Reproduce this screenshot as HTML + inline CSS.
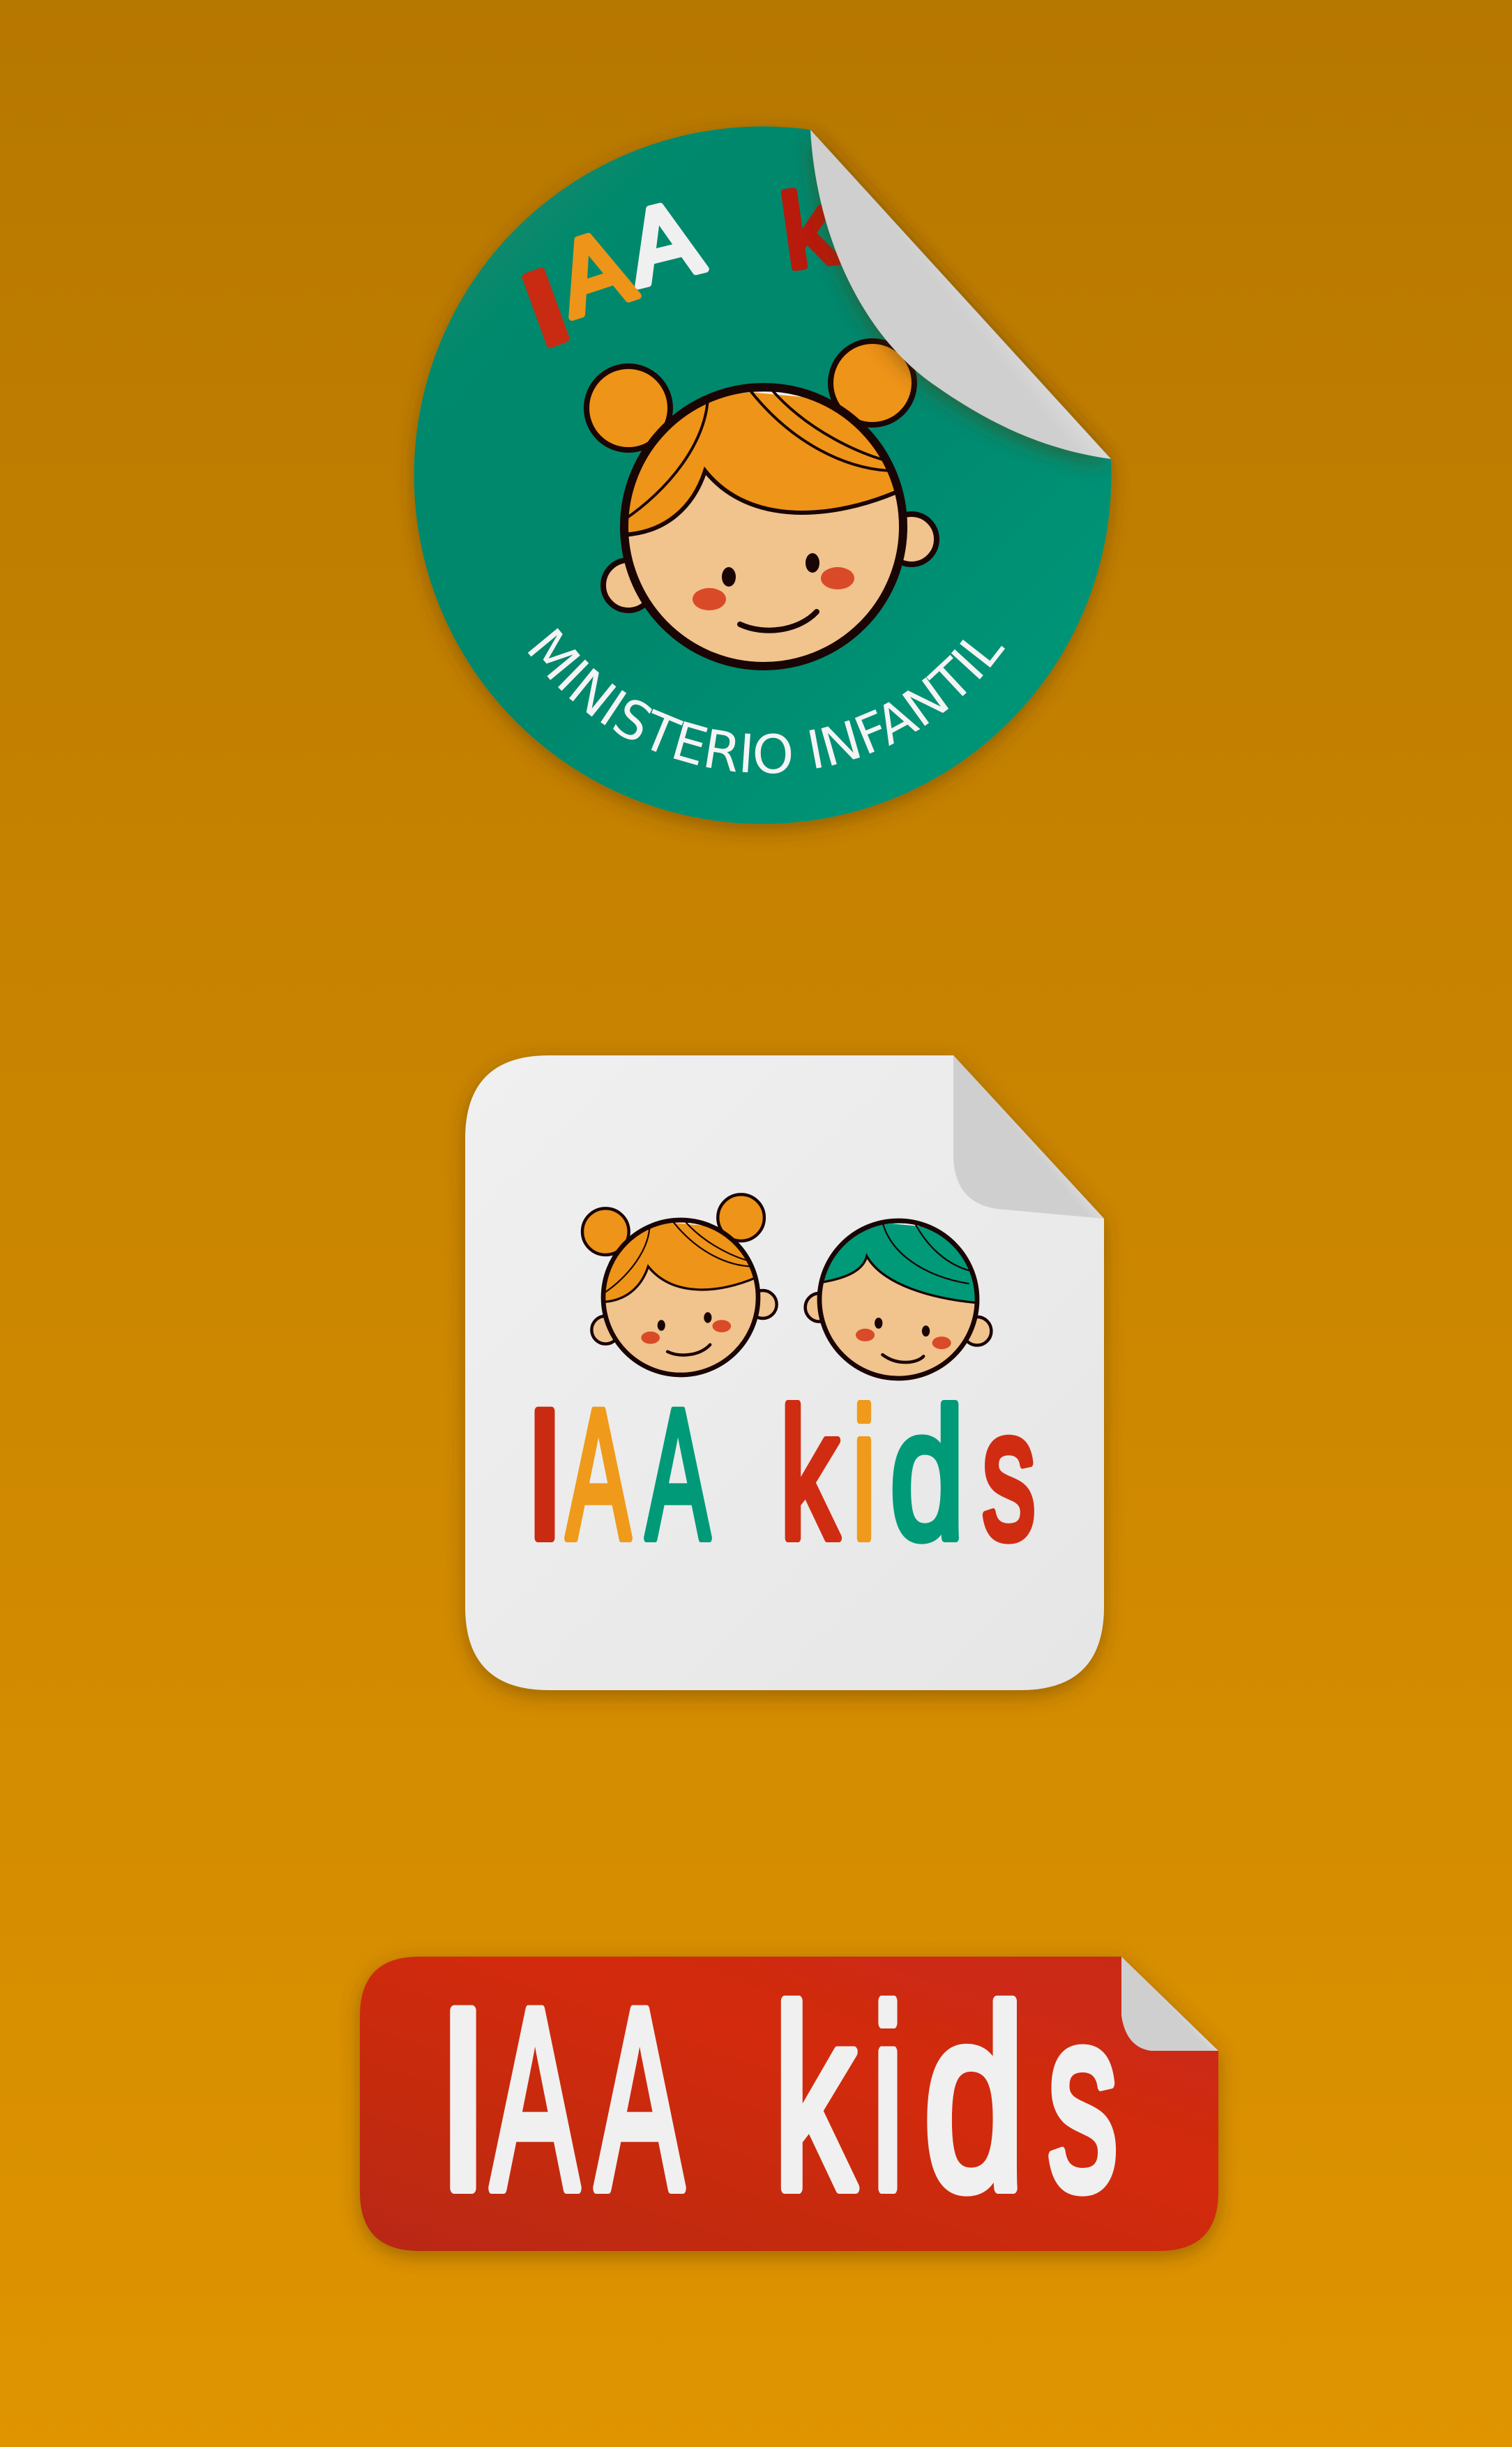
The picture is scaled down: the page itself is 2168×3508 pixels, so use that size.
<!DOCTYPE html>
<html><head><meta charset="utf-8"><style>
html,body{margin:0;padding:0;}
body{width:2168px;height:3508px;overflow:hidden;}
svg{display:block;}
</style></head><body>
<svg width="2168" height="3508" viewBox="0 0 2168 3508" xmlns="http://www.w3.org/2000/svg">
<defs>
<linearGradient id="bg" x1="0" y1="0" x2="0" y2="1">
<stop offset="0" stop-color="#b77800"/><stop offset="1" stop-color="#df9400"/>
</linearGradient>
<linearGradient id="teal" x1="0" y1="0" x2="1" y2="1">
<stop offset="0" stop-color="#0a8a6c"/><stop offset="0.5" stop-color="#00876c"/><stop offset="1" stop-color="#009a7c"/>
</linearGradient>
<linearGradient id="red" x1="0" y1="1" x2="1" y2="0">
<stop offset="0" stop-color="#b82812"/><stop offset="0.6" stop-color="#d32c10"/><stop offset="1" stop-color="#c72a14"/>
</linearGradient>
<linearGradient id="paper" x1="0" y1="0" x2="1" y2="1">
<stop offset="0" stop-color="#f0f0f0"/><stop offset="1" stop-color="#e6e6e6"/>
</linearGradient>
<linearGradient id="curl" x1="0" y1="0" x2="1" y2="-0.9">
<stop offset="0" stop-color="#cfcfcf"/><stop offset="0.25" stop-color="#ffffff"/><stop offset="0.45" stop-color="#e4e4e4"/><stop offset="0.65" stop-color="#ffffff"/><stop offset="1" stop-color="#d8d8d8"/>
</linearGradient>
<filter id="sh" x="-20%" y="-20%" width="140%" height="140%">
<feDropShadow dx="0" dy="8" stdDeviation="14" flood-color="#5a3000" flood-opacity="0.45"/>
</filter>
<clipPath id="fc"><circle r="100"/></clipPath>
<g id="girl">
<circle cx="-97" cy="-85" r="30" fill="#ee9418" stroke="#1a0505" stroke-width="4"/>
<circle cx="78" cy="-103" r="30" fill="#ee9418" stroke="#1a0505" stroke-width="4"/>
<circle cx="-97" cy="42" r="18" fill="#f1c38d" stroke="#1a0505" stroke-width="4"/>
<circle cx="106" cy="9" r="18" fill="#f1c38d" stroke="#1a0505" stroke-width="4"/>
<circle r="100" fill="#f1c38d"/>
<g clip-path="url(#fc)">
<path d="M-105 6 C-70 6 -50 -15 -42 -40 C-10 0 50 -5 98 -26 L110 -120 L-110 -120 Z" fill="#ee9418"/>
<path d="M-70 -80 C-40 -100 20 -100 60 -90 L-50 -100 Z" fill="#f2f2f2"/>
<path d="M-105 6 C-70 6 -50 -15 -42 -40 C-10 0 50 -5 98 -26" fill="none" stroke="#1a0505" stroke-width="3"/>
<path d="M-40 -95 C-40 -60 -70 -25 -100 -5 M-10 -98 C20 -60 60 -40 95 -40 M5 -99 C30 -70 70 -50 98 -45" fill="none" stroke="#1a0505" stroke-width="2"/>
</g>
<circle r="100" fill="none" stroke="#1a0505" stroke-width="6"/>
<ellipse cx="-25" cy="36" rx="5" ry="7" fill="#1a0505"/>
<ellipse cx="35" cy="26" rx="5" ry="7" fill="#1a0505"/>
<ellipse cx="-39" cy="52" rx="12" ry="8" fill="#d94a28"/>
<ellipse cx="53" cy="37" rx="12" ry="8" fill="#d94a28"/>
<path d="M-17 70 C0 78 25 75 38 61" fill="none" stroke="#1a0505" stroke-width="4" stroke-linecap="round"/>
</g>
<g id="boy">
<circle cx="-100" cy="10" r="18" fill="#f1c38d" stroke="#1a0505" stroke-width="4"/>
<circle cx="100" cy="40" r="18" fill="#f1c38d" stroke="#1a0505" stroke-width="4"/>
<circle r="100" fill="#f1c38d"/>
<g clip-path="url(#fc)">
<path d="M-110 -20 C-70 -25 -45 -35 -40 -55 C-20 -20 40 0 110 5 L110 -120 L-110 -120 Z" fill="#009a78"/>
<path d="M-70 -80 C-40 -100 20 -100 60 -90 L-50 -100 Z" fill="#f2f2f2"/>
<path d="M-110 -20 C-70 -25 -45 -35 -40 -55 C-20 -20 40 0 110 5" fill="none" stroke="#1a0505" stroke-width="3"/>
<path d="M-20 -98 C-10 -60 30 -30 90 -20 M20 -99 C40 -60 70 -40 98 -35" fill="none" stroke="#1a0505" stroke-width="2"/>
</g>
<circle r="100" fill="none" stroke="#1a0505" stroke-width="6"/>
<ellipse cx="-25" cy="30" rx="5" ry="7" fill="#1a0505"/>
<ellipse cx="35" cy="40" rx="5" ry="7" fill="#1a0505"/>
<ellipse cx="-42" cy="45" rx="12" ry="8" fill="#d94a28"/>
<ellipse cx="55" cy="55" rx="12" ry="8" fill="#d94a28"/>
<path d="M-20 70 C0 85 25 80 32 72" fill="none" stroke="#1a0505" stroke-width="4" stroke-linecap="round"/>
</g>
<path id="arc" d="M 677 688 A 420 420 0 0 0 1517 688"/>
</defs>
<rect width="2168" height="3508" fill="url(#bg)"/>

<!-- circle sticker -->
<g filter="url(#sh)">
<path d="M1162 186 A500 500 0 1 0 1593 658 Z" fill="url(#teal)"/>
</g>
<g font-family="'Liberation Sans','DejaVu Sans',sans-serif" font-size="150" stroke-width="10" stroke-linejoin="round">
<text x="772" y="500" fill="#c92a12" stroke="#c92a12" transform="rotate(-20 772 500)" textLength="60" lengthAdjust="spacingAndGlyphs">I</text>
<text x="820" y="455" fill="#ee9418" stroke="#ee9418" transform="rotate(-18 820 455)">A</text>
<text x="915" y="410" fill="#f0f0f0" stroke="#f0f0f0" transform="rotate(-14 915 410)">A</text>
<text x="1130" y="385" fill="#b81a0c" stroke="#b81a0c" transform="rotate(-8 1130 385)">k</text>
</g>
<use href="#girl" transform="translate(1095 755) scale(2.0)"/>
<text font-family="'DejaVu Sans','Liberation Sans',sans-serif" font-size="76" fill="#f4f4f4"><textPath href="#arc" startOffset="50%" text-anchor="middle">MINISTERIO INFANTIL</textPath></text>
<path d="M1162 186 C1170 330 1230 470 1330 545 C1420 610 1500 645 1593 658 Z" fill="url(#curl)" filter="url(#sh)"/>

<!-- square sticker -->
<g filter="url(#sh)">
<path d="M787 1513 L1367 1513 L1583 1747 L1583 2303 Q1583 2423 1463 2423 L787 2423 Q667 2423 667 2303 L667 1633 Q667 1513 787 1513 Z" fill="url(#paper)"/>
</g>
<path d="M1367 1513 L1367 1660 Q1370 1730 1440 1734 L1583 1747 Z" fill="url(#curl)"/>
<use href="#girl" transform="translate(976 1860) scale(1.11)"/>
<use href="#boy" transform="translate(1288 1863) scale(1.13)"/>
<g font-family="'Liberation Sans','DejaVu Sans',sans-serif" font-size="265" stroke-width="12" stroke-linejoin="round" stroke-linecap="round">
<text x="752" y="2205" textLength="58" fill="#c92a12" stroke="#c92a12" lengthAdjust="spacingAndGlyphs">I</text>
<text x="812" y="2205" textLength="92" fill="#ef9a1a" stroke="#ef9a1a" lengthAdjust="spacingAndGlyphs">A</text>
<text x="926" y="2205" textLength="92" fill="#009a78" stroke="#009a78" lengthAdjust="spacingAndGlyphs">A</text>
<text x="1118" y="2205" textLength="85" fill="#d02c12" stroke="#d02c12" lengthAdjust="spacingAndGlyphs">k</text>
<text x="1222" y="2205" textLength="34" fill="#ef9a1a" stroke="#ef9a1a" lengthAdjust="spacingAndGlyphs">i</text>
<text x="1276" y="2205" textLength="107" fill="#009a78" stroke="#009a78" lengthAdjust="spacingAndGlyphs">d</text>
<text x="1408" y="2205" textLength="77" fill="#d02c12" stroke="#d02c12" lengthAdjust="spacingAndGlyphs">s</text>
</g>

<!-- red sticker -->
<g filter="url(#sh)">
<path d="M601 2805 L1608 2805 L1747 2940 L1747 3142 Q1747 3227 1662 3227 L601 3227 Q516 3227 516 3142 L516 2890 Q516 2805 601 2805 Z" fill="url(#red)"/>
</g>
<path d="M1608 2805 L1608 2890 Q1615 2935 1650 2940 L1747 2940 Z" fill="url(#curl)"/>
<g font-family="'Liberation Sans','DejaVu Sans',sans-serif" font-size="370" fill="#f0f0f0" stroke="#f0f0f0" stroke-width="16" stroke-linejoin="round">
<text x="626" y="3137" textLength="76" lengthAdjust="spacingAndGlyphs">I</text>
<text x="704" y="3137" textLength="126" lengthAdjust="spacingAndGlyphs">A</text>
<text x="854" y="3137" textLength="126" lengthAdjust="spacingAndGlyphs">A</text>
<text x="1109" y="3137" textLength="118" lengthAdjust="spacingAndGlyphs">k</text>
<text x="1250" y="3137" textLength="46" lengthAdjust="spacingAndGlyphs">i</text>
<text x="1324" y="3137" textLength="146" lengthAdjust="spacingAndGlyphs">d</text>
<text x="1502" y="3137" textLength="101" lengthAdjust="spacingAndGlyphs">s</text>
</g>
</svg>
</body></html>
